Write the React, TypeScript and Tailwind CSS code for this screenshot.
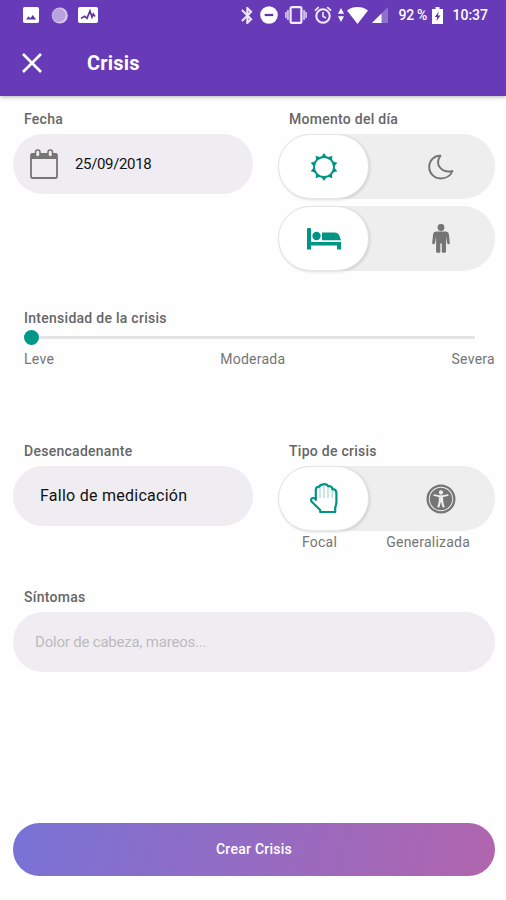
import { useState } from 'react';
import type { ReactNode } from 'react';
import { FaUniversalAccess } from 'react-icons/fa';

function StatusBar() {
  return (
    <div className="flex h-[30px] items-center pl-[23px] pr-[18px] text-white">
      <svg className="h-4 w-4" viewBox="0 0 16 16">
        <rect width="16" height="16" rx="1.8" fill="#fff" />
        <path d="M3 12.5l2.6-3.3 1.8 2 2.3-3.2 3.4 4.5z" fill="#5c35a8" />
      </svg>
      <svg className="ml-[12px] h-[17px] w-[17px]" viewBox="0 0 17 17">
        <circle cx="8.8" cy="8.5" r="8" fill="#d5c6ef" />
        <circle cx="7.6" cy="8.2" r="6.8" fill="#b8a3df" />
      </svg>
      <svg className="ml-[10px] h-4 w-5" viewBox="0 0 20 16">
        <rect width="20" height="16" rx="1.8" fill="#fff" />
        <path
          d="M3 11.3l3.8-2 2.2 2L12 4l2 6 1.3-3 1.7 2.4"
          fill="none"
          stroke="#5c35a8"
          strokeWidth="1.7"
        />
      </svg>

      <div className="ml-auto flex items-center">
        <svg className="h-[17px] w-[12px]" viewBox="5 2 13 20">
          <path
            d="M17.71 7.71L12 2h-1v7.59L6.41 5 5 6.41 10.59 12 5 17.59 6.41 19 11 14.41V22h1l5.71-5.71-4.3-4.29 4.3-4.29zM13 5.83l1.88 1.88L13 9.59V5.83zm1.88 10.46L13 18.17v-3.76l1.88 1.88z"
            fill="#f1ebfa"
            stroke="#f1ebfa"
            strokeWidth=".6"
          />
        </svg>
        <svg className="ml-[7px] h-[18px] w-[18px]" viewBox="0 0 18 18">
          <circle cx="9" cy="9" r="8.8" fill="#fff" />
          <rect x="4.7" y="7.9" width="8.6" height="2.2" fill="#5c35a8" />
        </svg>
        <svg className="ml-[7px] h-[18px] w-[22px]" viewBox="0 0 22 18">
          <rect x="5.6" y="1.2" width="10.8" height="15.6" rx="1.4" fill="none" stroke="#f1ebfa" strokeWidth="2.2" />
          <path d="M2.9 4v10M19.1 4v10M.8 6v6M21.2 6v6" stroke="#c9b8e8" strokeWidth="2" />
        </svg>
        <svg className="ml-[7px] h-[18px] w-[18px]" viewBox="0 0 18 18" fill="none" stroke="#f1ebfa">
          <circle cx="9" cy="10" r="6.7" strokeWidth="2" />
          <path d="M9 6v4.3l3 1.8" strokeWidth="1.6" />
          <path d="M.9 4.6L4.8 1.2M17.1 4.6l-3.9-3.4" strokeWidth="1.7" />
        </svg>
        <svg className="ml-[6px] h-[14px] w-[6px]" viewBox="0 0 6 14">
          <path d="M3 0l3 5.8H0zM3 14l3-5.8H0z" fill="#fff" />
        </svg>
        <svg className="ml-[3px] h-[17px] w-[21px]" viewBox="0 0 21 17">
          <path d="M0 3.4C6-1.1 15-1.1 21 3.4L10.5 17z" fill="#fff" />
        </svg>
        <svg className="ml-[4px] h-4 w-4" viewBox="0 0 16 16">
          <path d="M16 0v16H0z" fill="#8f6fca" />
          <path d="M9.500 6.500V16H0z" fill="#fff" />
        </svg>
        <span className="ml-[10px] w-[30px] whitespace-nowrap text-[14px] font-medium tracking-[-0.3px]">92 %</span>
        <svg className="ml-[4px] h-[17px] w-[11px]" viewBox="0 0 11 17">
          <path d="M3.500 0h4v2H11v15H0V2h3.500z" fill="#fff" />
          <path d="M6.800 4.500L2.800 10h2.400l-.7 4 4-5.500H5.900z" fill="#5c35a8" />
        </svg>
        <span className="ml-[9px] text-[14px] font-medium">10:37</span>
      </div>
    </div>
  );
}

function SunIcon() {
  const rays = [0, 36, 72, 108, 144, 180, 216, 252, 288, 324];
  return (
    <svg className="h-7 w-7" viewBox="-14 -14 28 28">
      <circle r="10" fill="none" stroke="currentColor" strokeWidth="1.900" />
      {rays.map((angle) => (
        <path key={angle} d="M-2.6 -10.2L0 -14L2.6 -10.2z" fill="currentColor" transform={`rotate(${angle})`} />
      ))}
    </svg>
  );
}

function MoonIcon() {
  return (
    <svg className="h-[26px] w-[26px]" viewBox="0 0 26 26">
      <path
        d="M12.500 1.800C6 1.500 1.200 6.500 1.200 13S6.300 24.500 12.500 24.500C18 24.500 22.500 21.700 24.500 17C15 19.500 5.500 11.500 12.500 1.800z"
        fill="none"
        stroke="currentColor"
        strokeWidth="1.900"
        strokeLinejoin="round"
      />
    </svg>
  );
}

function BedIcon() {
  return (
    <svg className="h-[22px] w-[34px]" viewBox="0 0 34 22" fill="currentColor">
      <path d="M0 1.200Q0 0 1.200 0h1.600Q4 0 4 1.200V14h30v7.500h-4V17.500H4v4H0z" />
      <circle cx="9.500" cy="8" r="4.200" />
      <path d="M15 4.500h12.500q3.500 0 4.800 3l1.700 4.800H15z" />
    </svg>
  );
}

function ManIcon() {
  return (
    <svg className="h-[29px] w-[18px]" viewBox="0 0 18 29" fill="currentColor">
      <circle cx="9" cy="3.500" r="3.400" />
      <path d="M4.500 7.500h9q3 0 3.400 3l.9 8.500q0 1.200-1.200 1.200t-1.500-1.200L14 12.500v15.300q0 1-1.200 1h-2q-1 0-1-1V19.500H8.300v8.300q0 1-1 1h-2q-1.200 0-1.200-1V12.500L3 19q-.3 1.200-1.500 1.200T.2 19l.9-8.500q.4-3 3.400-3z" />
    </svg>
  );
}

function HandIcon() {
  return (
    <svg className="h-[31px] w-[28px]" viewBox="0 0 28 31" fill="none" stroke="currentColor" strokeLinejoin="round">
      <path
        d="M5.800 16.800V6.500Q6 3.700 9.500 3.700Q10 1.700 12.300 1.700Q14 .8 15.800 1.400Q17.500 1.700 18 3.200Q22 2.700 22.300 6.200Q26.300 6.300 26.400 10.200V19.500Q26.200 22 25.200 24.500V29H10.200V27L1.500 18.500Q.3 15.500 3 15Q4.500 14.800 5.800 16.800z"
        strokeWidth="2.200"
      />
      <path d="M10 4.500v10.500M14 3v12M18 4v11M22.200 7v8" strokeWidth="1" opacity=".45" />
    </svg>
  );
}

function CalendarIcon() {
  return (
    <svg className="h-[30px] w-7 text-[#757575]" viewBox="0 0 28 30" fill="none" stroke="currentColor">
      <rect x="1" y="5" width="26" height="24" rx="1.200" strokeWidth="1.800" />
      <path d="M1 5h26v5H1z" fill="currentColor" stroke="none" />
      <rect x="5.500" y="1" width="4.500" height="7" rx="2.200" fill="#efedf2" strokeWidth="1.600" />
      <rect x="18" y="1" width="4.500" height="7" rx="2.200" fill="#efedf2" strokeWidth="1.600" />
    </svg>
  );
}

interface ToggleProps {
  left: ReactNode;
  right: ReactNode;
}

function Toggle({ left, right }: ToggleProps) {
  const [selected, setSelected] = useState('left');
  const active = 'border border-[#e6e6e6] bg-white text-[#009484] shadow-[1px_1px_3px_rgba(0,0,0,0.14)]';

  return (
    <div className="flex h-[65px] w-[217px] justify-between rounded-full bg-[#eeeeee]">
      <button
        onClick={() => setSelected('left')}
        className={`flex w-[91px] items-center justify-center rounded-full ${selected === 'left' ? active : 'text-[#757575]'}`}
      >
        {left}
      </button>
      <button
        onClick={() => setSelected('right')}
        className={`flex w-[109px] items-center justify-center rounded-full ${selected === 'right' ? active : 'text-[#757575]'}`}
      >
        {right}
      </button>
    </div>
  );
}

function Label({ children }: { children: ReactNode }) {
  return <h2 className="pl-[11px] text-[14px] font-medium leading-5 tracking-[0.27px] text-[#666666]">{children}</h2>;
}

export default function App() {
  const [symptoms, setSymptoms] = useState('');

  return (
    <div className="flex h-[900px] w-[506px] flex-col bg-[#fefefe] font-['Roboto',sans-serif]">
      <header className="h-24 shrink-0 bg-[#673ab7] shadow-[0_1px_4px_rgba(0,0,0,0.3)]">
        <StatusBar />
        <div className="flex h-[66px] items-center pl-[22px] text-white">
          <svg className="h-5 w-5" viewBox="0 0 20 20">
            <path d="M1 1l18 18M19 1L1 19" stroke="#fff" strokeWidth="2.700" />
          </svg>
          <h1 className="ml-[45px] text-[20px] font-bold tracking-[0.2px]">Crisis</h1>
        </div>
      </header>

      <main className="flex grow flex-col pl-[13px] pr-[11px] pt-[13px]">
        <div className="flex justify-between">
          <section className="w-60">
            <Label>Fecha</Label>
            <div className="mt-[5px] flex h-[60px] items-center rounded-full bg-[#efedf2] pl-[17px]">
              <CalendarIcon />
              <span className="ml-[17px] text-[15px] tracking-[-0.35px] text-[#111111]">25/09/2018</span>
            </div>
          </section>
          <section className="w-[217px]">
            <Label>Momento del día</Label>
            <div className="mt-[5px] flex flex-col gap-[7px]">
              <Toggle left={<SunIcon />} right={<MoonIcon />} />
              <Toggle left={<BedIcon />} right={<ManIcon />} />
            </div>
          </section>
        </div>

        <section className="mt-[37px]">
          <Label>Intensidad de la crisis</Label>
          <div className="ml-[11px] mr-5 mt-[2px] flex h-[15px] items-center">
            <div className="h-[15px] w-[15px] rounded-full bg-[#009688]" />
            <div className="h-[3px] grow bg-[#e4e4e4]" />
          </div>
          <div className="mt-[4px] flex justify-between pl-[11px] text-[14px] leading-5 tracking-[0.27px] text-[#757575]">
            <span>Leve</span>
            <span>Moderada</span>
            <span>Severa</span>
          </div>
        </section>

        <div className="mt-[72px] flex justify-between">
          <section className="w-60">
            <Label>Desencadenante</Label>
            <div className="mt-[5px] flex h-[60px] items-center rounded-full bg-[#efedf2] pl-[27px] text-[16px] tracking-[0.26px] text-[#111111]">
              Fallo de medicación
            </div>
          </section>
          <section className="w-[217px]">
            <Label>Tipo de crisis</Label>
            <div className="mt-[5px]">
              <Toggle left={<HandIcon />} right={<FaUniversalAccess className="h-[30px] w-[30px]" />} />
            </div>
            <div className="mt-[1px] flex justify-between pl-6 pr-[25px] text-[14px] leading-5 tracking-[0.22px] text-[#757575]">
              <span>Focal</span>
              <span>Generalizada</span>
            </div>
          </section>
        </div>

        <section className="mt-[35px]">
          <Label>Síntomas</Label>
          <input
            value={symptoms}
            onChange={(e) => setSymptoms(e.target.value)}
            placeholder="Dolor de cabeza, mareos..."
            className="mt-[5px] block h-[60px] w-full rounded-full bg-[#efedf2] px-[22px] text-[15px] tracking-[-0.2px] text-[#111111] outline-none placeholder:text-[#bcbabf]"
          />
        </section>

        <button className="mb-6 mt-auto h-[53px] shrink-0 rounded-full bg-linear-[105deg,#7872d6,#b165ae] text-[14px] font-medium tracking-[0.25px] text-white">
          Crear Crisis
        </button>
      </main>
    </div>
  );
}
